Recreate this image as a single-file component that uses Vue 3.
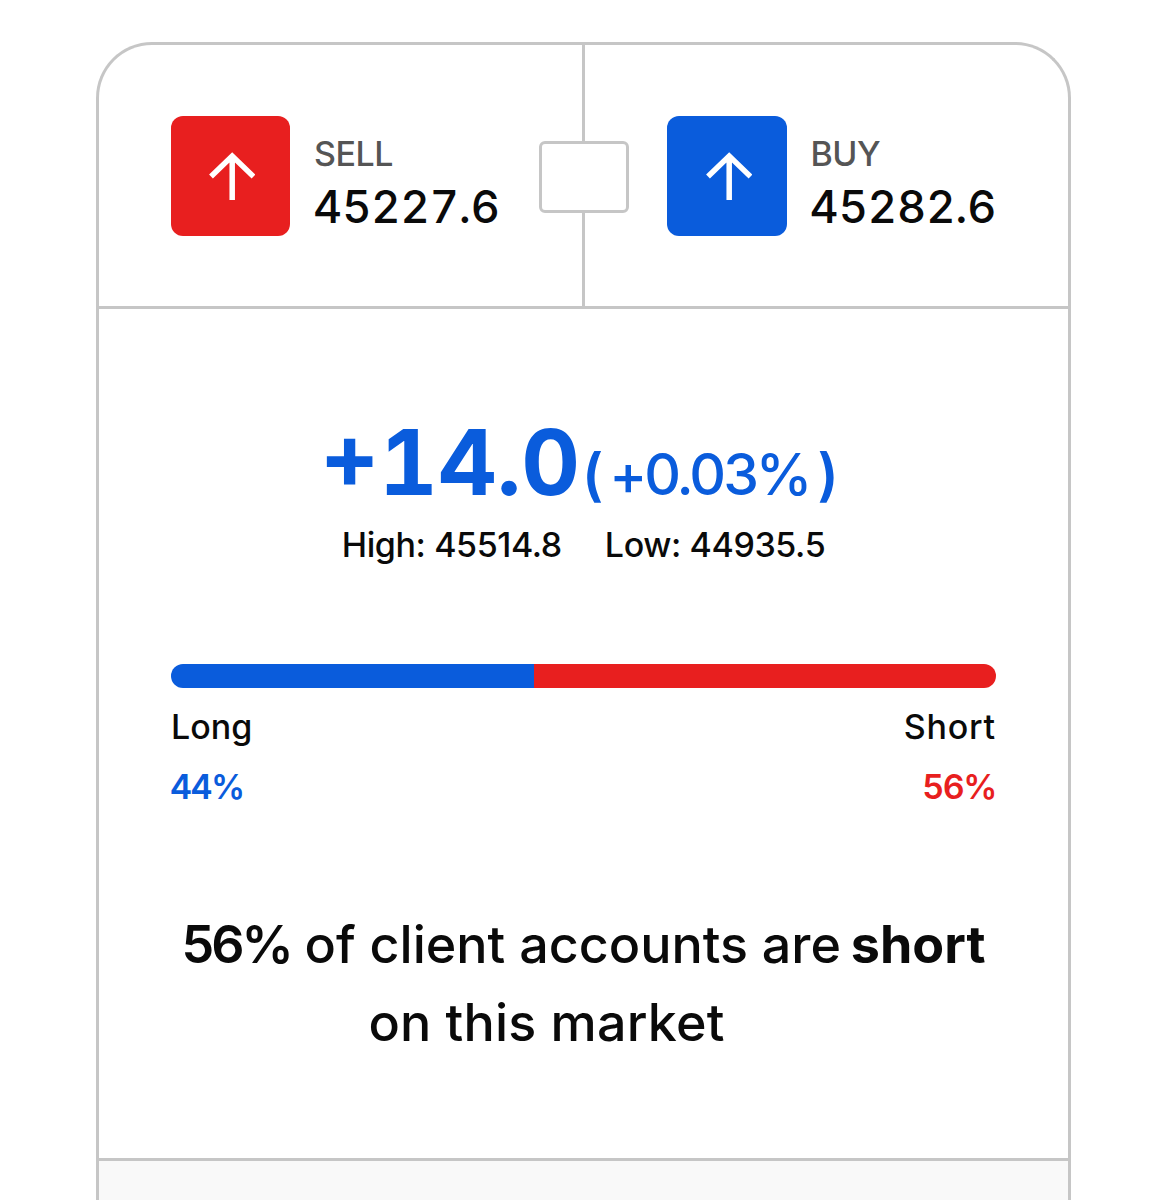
<template>
  <div class="page">
    <section class="card">
      <div class="quote-row">
        <div v-for="q in quotes" :key="q.label" class="quote" :class="q.cls">
          <div class="quote-btn">
            <svg width="50" height="50" viewBox="0 0 50 50" fill="none">
              <path d="M27.200 49V5M6 25.500 27.200 5 48.500 25.500" stroke="#fff" stroke-width="5.500" />
            </svg>
          </div>
          <div class="quote-text">
            <div class="quote-label">{{ q.label }}</div>
            <div class="quote-price">{{ q.price }}</div>
          </div>
        </div>
        <div class="spread"></div>
      </div>

      <div class="stats">
        <div class="change">
          <span class="change-big">+14.0</span>
          <span class="change-pct"><span class="paren">(</span>+0.03%<span class="paren">)</span></span>
        </div>
        <div class="range">
          <span>High: 45514.8</span>
          <span>Low: 44935.5</span>
        </div>

        <div class="bar">
          <div class="bar-long" :style="{ width: longPct + '%' }"></div>
          <div class="bar-short"></div>
        </div>
        <div class="sentiment">
          <div>
            <div class="side">Long</div>
            <div class="pct long">{{ longPct }}%</div>
          </div>
          <div class="right">
            <div class="side">Short</div>
            <div class="pct short">{{ 100 - longPct }}%</div>
          </div>
        </div>

        <p class="summary">
          <span class="summary-pct">56%</span> of client accounts are <b>short</b><br />
          <span class="summary-second">on this market</span>
        </p>
      </div>

      <div class="footer"></div>
    </section>
  </div>
</template>

<script setup>
const longPct = 44

const quotes = [
  { label: 'SELL', price: '45227.6', cls: 'sell' },
  { label: 'BUY', price: '45282.6', cls: 'buy' },
]
</script>

<style>
html,
body {
  margin: 0;
  background: #fff;
}
</style>

<style scoped>
.page {
  height: 1200px;
  overflow: hidden;
  padding: 42px 96px 0 96px;
  box-sizing: border-box;
  font-family: Inter, "Liberation Sans", sans-serif;
  color: #0a0a0a;
}

.card {
  border: 3px solid #c6c6c6;
  border-bottom: none;
  border-radius: 56px 56px 0 0;
  background: #fff;
}

.quote-row {
  position: relative;
  display: flex;
  height: 261px;
  border-bottom: 3px solid #c6c6c6;
}

.quote {
  display: flex;
  align-items: center;
  gap: 24px;
  padding-left: 71.500px;
  box-sizing: border-box;
}

.quote.sell {
  flex: 0 0 486px;
  border-right: 3px solid #c6c6c6;
}

.quote.buy {
  flex: 1;
  padding-left: 82px;
}

.quote-btn {
  width: 119.500px;
  height: 120px;
  border-radius: 12px;
  display: flex;
  align-items: center;
  justify-content: center;
}

.sell .quote-btn {
  background: #e81f1f;
}

.buy .quote-btn {
  background: #0a5cdc;
}

.quote-text {
  padding-top: 16px;
}

.quote-label {
  font-size: 34px;
  line-height: 40px;
  font-weight: 500;
  letter-spacing: -0.500px;
  color: #555;
}

.quote-price {
  font-size: 45px;
  line-height: 54px;
  font-weight: 500;
  margin-top: 6px;
  margin-left: -1px;
  font-variant-numeric: tabular-nums;
}

.spread {
  position: absolute;
  left: 440px;
  top: 96px;
  width: 90px;
  height: 72px;
  box-sizing: border-box;
  border: 3px solid #c6c6c6;
  border-radius: 6px;
  background: #fff;
}

.stats {
  height: 852px;
  padding: 0 72px;
  box-sizing: border-box;
  border-bottom: 3px solid #c6c6c6;
}

.change {
  display: flex;
  justify-content: center;
  align-items: baseline;
  gap: 6px;
  padding-top: 98px;
  padding-right: 3px;
  color: #0a5cdc;
}

.change-big {
  font-size: 91px;
  line-height: 110px;
  font-weight: 700;
  font-variant-numeric: tabular-nums;
}

.change-pct {
  font-size: 57px;
  font-weight: 500;
  letter-spacing: -3px;
}

.paren {
  margin: 0 8px;
  font-weight: 600;
}

.paren:first-child {
  margin-left: -4px;
  margin-right: 9px;
}

.range {
  display: flex;
  justify-content: center;
  gap: 43px;
  font-size: 34px;
  line-height: 42px;
  font-weight: 500;
  letter-spacing: -0.400px;
  margin-top: 7px;
}

.bar {
  display: flex;
  height: 24px;
  margin-top: 98px;
  border-radius: 12px;
  overflow: hidden;
}

.bar-long {
  background: #0a5cdc;
}

.bar-short {
  flex: 1;
  background: #e81f1f;
}

.sentiment {
  display: flex;
  justify-content: space-between;
  margin-top: 18px;
  font-size: 34px;
  font-weight: 500;
}

.right {
  text-align: right;
}

.side {
  line-height: 42px;
}

.right .side {
  letter-spacing: 0.800px;
}

.pct {
  line-height: 42px;
  margin-top: 18px;
  font-weight: 600;
  letter-spacing: -1.500px;
  font-variant-numeric: tabular-nums;
}

.long {
  color: #0a5cdc;
  margin-left: -1px;
}

.short {
  color: #e81f1f;
}

.summary {
  margin: 98px 0 0;
  text-align: center;
  font-size: 52px;
  line-height: 78px;
  font-weight: 500;
  white-space: nowrap;
}

.summary-pct {
  font-weight: 600;
  letter-spacing: -3px;
}

.summary b {
  font-weight: 700;
  margin-left: -4px;
}

.summary-second {
  margin-right: 74px;
  letter-spacing: 0.200px;
}

.footer {
  height: 60px;
  background: #f9f9f9;
}
</style>
